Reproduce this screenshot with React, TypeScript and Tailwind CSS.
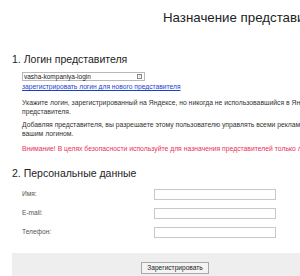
import React from "react";

export default function App() {
  return (
    <div className="w-[300px] h-[276px] overflow-hidden bg-white text-[#333] font-['Liberation_Sans',Arial,sans-serif] relative">
      <div className="pt-[9px] pl-[163px] text-[13.3px] leading-[18px] whitespace-nowrap text-[#222]">
        Назначение представителя
      </div>

      <div className="pl-[12px] mt-[26px] text-[10.5px] leading-[13px] whitespace-nowrap text-[#222]">
        1. Логин представителя
      </div>

      <div className="pl-[22px] mt-[6px]">
        <div className="w-[123px] h-[9px] border border-[#b8b8b8] flex items-center justify-between pl-[1px] pr-[2px]">
          <span className="text-[6.5px] leading-[7px] text-[#222] whitespace-nowrap">vasha-kompaniya-login</span>
          <span className="w-[5px] h-[5px] border border-[#888] flex items-center justify-center text-[4px] leading-[4px] text-[#666]">!</span>
        </div>
        <div className="mt-[2px] text-[6.7px] leading-[8px] text-[#1a3fcc] underline whitespace-nowrap">
          зарегистрировать логин для нового представителя
        </div>

        <div className="mt-[7px] text-[6.8px] leading-[9px] whitespace-nowrap text-[#333]">
          Укажите логин, зарегистрированный на Яндексе, но никогда не использовавшийся в Яндексе
          <br />
          представителя.
        </div>
        <div className="mt-[4px] text-[6.8px] leading-[9px] whitespace-nowrap text-[#333]">
          Добавляя представителя, вы разрешаете этому пользователю управлять всеми рекламными кампаниями
          <br />
          вашим логином.
        </div>
        <div className="mt-[6px] text-[6.8px] leading-[9px] whitespace-nowrap text-[#e8315a]">
          Внимание! В целях безопасности используйте для назначения представителей только логины
        </div>
      </div>

      <div className="pl-[12px] mt-[14px] text-[10.5px] leading-[13px] whitespace-nowrap text-[#222]">
        2. Персональные данные
      </div>

      <div className="pl-[22px] mt-[8px] flex flex-col gap-[7px]">
        {["Имя:", "E-mail:", "Телефон:"].map((l) => (
          <div key={l} className="flex items-center h-[12px]">
            <span className="w-[132px] text-[6.6px] leading-[8px] text-[#555] whitespace-nowrap">{l}</span>
            <div className="w-[122px] h-[11px] border border-[#c8c8c8] bg-white" />
          </div>
        ))}
      </div>

      <div className="ml-[12px] mt-[15px] h-[30px] bg-[#eeeeee] flex justify-center pt-[9px] pl-[38px]">
        <div className="h-[12px] px-[5px] border border-[#a8a8a8] bg-[#f4f4f4] text-[6.6px] leading-[10px] text-[#222] whitespace-nowrap">
          Зарегистрировать
        </div>
      </div>
    </div>
  );
}
